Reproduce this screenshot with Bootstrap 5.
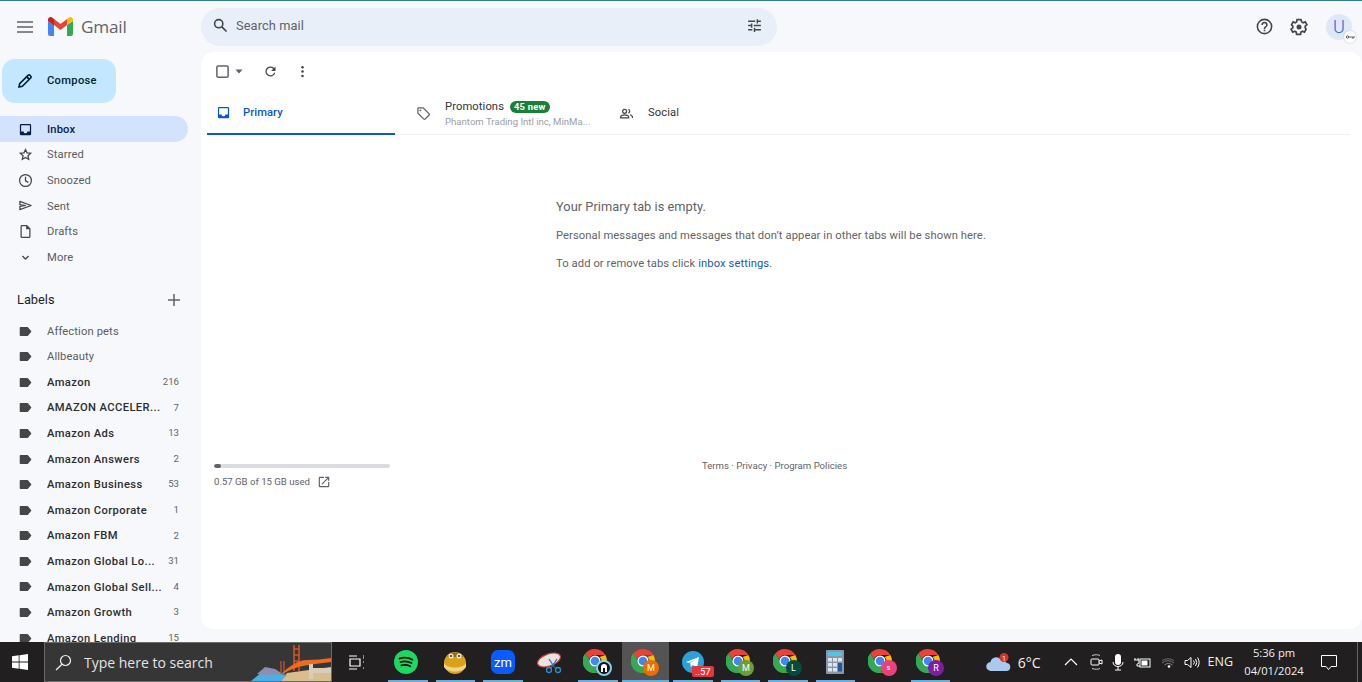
<!DOCTYPE html>
<html lang="en"><head><meta charset="utf-8"><title>Gmail</title>
<link href="https://cdn.jsdelivr.net/npm/bootstrap@5.3.0/dist/css/bootstrap.min.css" rel="stylesheet">
<style>
html,body{height:682px;overflow:hidden}
body{background:#f6f8fc;font-family:Roboto,"Liberation Sans",sans-serif;color:#5a5d5f;font-size:11.2px;border-top:1px solid #2f8285}
.gm-app{height:641px;overflow:hidden;position:relative}
.gm-top{height:51px}
.gm-burger{width:48px;padding-left:17px}
.gm-brand{font-size:17.2px;color:#5f6368;font-family:"Open Sans",Roboto,sans-serif;letter-spacing:-.2px;width:153px}
.gm-brand svg{margin-right:8px}
.gm-search{width:576px;height:38px;background:#e9eff9;border-radius:19px;padding:0 14px 2px 11px;font-size:12.8px;color:#5f6368;letter-spacing:.1px}
.gm-search span{margin-left:7px}
.gm-topicons{padding-right:10px;gap:15px}
.gm-avatar{width:26px;height:26px;border-radius:50%;background:#dfe8f7;color:#1a63e8;font-size:18px;font-weight:300;line-height:26px;text-align:center;position:relative;margin-left:2px}
.gm-key{position:absolute;right:-4px;bottom:-3px;width:12px;height:12px;background:#fff;border-radius:50%;display:flex;align-items:center;justify-content:center;box-shadow:0 0 2px #bbb}
.gm-body{height:590px}
.gm-side{width:201px;flex:none;overflow:hidden}
.gm-compose{width:114px;height:44px;margin:7px 0 13.4px 2px;background:#c2e7ff;border-radius:13px;color:#001d35;font-weight:500;font-size:11.2px;padding-left:15px;gap:14px;letter-spacing:.3px}
.gm-row{height:25.6px;display:flex;align-items:center;padding:0 9px 0 18px;width:188px;border-radius:0 13px 13px 0;letter-spacing:.12px}
.gm-row svg{flex:none;width:15px;height:15px;margin-right:14px}
.gm-row .gm-name{flex:1;min-width:0;white-space:nowrap;padding-top:2px}
.gm-row .gm-count{font-size:9.6px;color:#5f6368;font-weight:400;letter-spacing:0;width:19px;text-align:right;flex:none}
.gm-on{background:#d3e3fd;color:#041e49;font-weight:500}
.gm-bold{font-weight:500;color:#2b2d30;letter-spacing:.4px!important}
.gm-labels{height:25px;margin:17.6px 0 5.7px;padding:0 8px 0 17px;width:188px;font-size:12.8px;color:#1f1f1f}
.gm-panel{flex:1;height:577px;background:#fff;border-radius:13px;display:flex;flex-direction:column;padding-left:6px}
.gm-tool{height:38px;padding-left:8px;flex:none}
.gm-tool svg{display:block}
.gm-gap-a{margin-left:19px}
.gm-gap-b{margin-left:17px}
.gm-tabs{height:45px;border-bottom:1px solid #f0f0f0;margin-right:12px;flex:none}
.gm-tab{height:45px;width:188px;padding:2px 0 0 9px;display:flex;align-items:center;gap:13px}
.gm-tab-on{border-bottom:2px solid #0b57d0;color:#0b57d0;font-weight:500;gap:12px;letter-spacing:.08px}
.gm-tab-on span{padding-top:2px}
.gm-tab-promo{width:204px;padding-left:21px;gap:14px;color:#303236;letter-spacing:.1px}
.gm-tab-social{padding-left:20px;gap:14px;color:#303236;letter-spacing:.1px}
.gm-promo-text{padding-top:2px}
.gm-sub{font-size:9.6px;color:#9aa0a6;letter-spacing:0;white-space:nowrap;margin-top:-1px}
.gm-pill{background:#188038;color:#fff;border-radius:7px;font-size:9.4px;font-weight:700;padding:0 4px;line-height:12px;margin-left:6px;display:inline-block;letter-spacing:.2px}
.gm-empty{padding:63px 0 0 349px;color:#5f6368;height:329px;flex:none}
.gm-empty h2{font-size:12.8px;font-weight:400;margin:0 0 13px;line-height:17px;color:#5f6368;letter-spacing:.03px}
.gm-empty p{margin:0 0 13px;line-height:15px;font-size:11.2px;letter-spacing:.09px}
.gm-empty a{color:#1a56c4;text-decoration:none}
.gm-foot{padding-left:7px;font-size:9.6px;color:#5f6368}
.gm-store{width:176px}
.gm-track{height:4px;background:#dadce0;border-radius:2px;margin-bottom:7px;overflow:hidden}
.gm-fill{height:4px;background:#5f6368;border-radius:2px}
.gm-ext{margin-left:7px}
.gm-terms{margin-left:312px;line-height:11px;margin-top:-4px}
.gm-task{height:40px;background:#211f1f;color:#fff;font-family:"Open Sans","Liberation Sans",sans-serif}
.gm-win{width:44px;flex:none;padding-right:4px}
.gm-find{width:288px;height:40px;background:#363636;border:1px solid #6a6a6a;font-size:14px;color:#e4e4e4;padding-left:10px;gap:12px;flex:none;overflow:hidden;position:relative}
.gm-find .gm-art{position:absolute;right:0;bottom:0}
.gm-view{width:52px;flex:none;padding-right:4px}
.gm-cell{width:47.5px;height:40px;flex:none;position:relative;display:flex;align-items:center;justify-content:center}
.gm-run::after{content:"";position:absolute;left:4px;right:4px;bottom:0;height:2px;background:#65aee0}
.gm-cur{background:#545454}
.gm-cur::after{left:0;right:0}
.gm-chr{margin:0 5px 2px 0}
.gm-spot{margin-right:3px}
.gm-badge{position:absolute;right:10px;bottom:6px;width:16px;height:16px;border-radius:50%;color:#fff;font-size:9px;line-height:16px;text-align:center;font-family:Roboto,sans-serif}
.gm-b-lock{background:#111;border:2px solid #7fd0f0;line-height:10px}
.gm-b-lock svg{display:block;margin:1px auto}
.gm-b-o{background:#ef6c00}.gm-b-g{background:#689f38}.gm-b-t{background:#004d40}.gm-b-p{background:#ec407a;font-size:7.5px}.gm-b-v{background:#7b1fa2}
.gm-count-badge{position:absolute;left:23px;bottom:5px;background:#e8343a;color:#fff;font-size:9.5px;line-height:11px;padding:0 3px;border-radius:2px;font-family:Roboto,sans-serif}
.gm-tray{margin-left:auto;height:40px;font-size:12.5px;color:#f0f0f0}
.gm-wx{gap:7px;font-size:14px;margin-right:23px}
.gm-clock{font-size:11.2px;line-height:18px;text-align:center;width:72px;margin-left:5px}
.gm-note{margin-left:11px}
.gm-edge{width:5px;height:40px;border-left:1px solid #666;margin-left:20px}
.gm-trayicons{gap:9px}
.gm-ch{margin-right:3px}
.gm-mr1{margin-right:1px}
</style></head><body>
<div class="gm-app">
 <div class="gm-top d-flex align-items-center">
  <div class="gm-burger d-flex"><svg width="16" height="12" viewBox="0 0 16 12"><path d="M0 1h16M0 6h16M0 11h16" stroke="#5f6368" stroke-width="1.5"/></svg></div>
  <div class="gm-brand d-flex align-items-center"><svg width="25" height="19" viewBox="0 0 25 19"><path d="M0 4v13a2 2 0 0 0 2 2h4V8z" fill="#4285f4"/><path d="M19 8v11h4a2 2 0 0 0 2-2V4z" fill="#34a853"/><path d="M19 2v6l6-4.500V2.500C25 .5 22.500-.7 21 .5z" fill="#fbbc04"/><path d="M6 8V2l6.500 5L19 2v6l-6.500 5z" fill="#ea4335"/><path d="M0 2.500V4l6 4.500V2L4 .5C2.500-.7 0 .5 0 2.500z" fill="#c5221f"/></svg>Gmail</div>
  <div class="gm-search d-flex align-items-center"><svg width="17" height="17" viewBox="0 0 24 24"><circle cx="9.500" cy="9.500" r="5.800" fill="none" stroke="#444746" stroke-width="2.200"/><path d="M14 14l6.500 6.500" stroke="#444746" stroke-width="2.400"/></svg><span>Search mail</span>
   <svg class="ms-auto" width="17" height="17" viewBox="0 0 24 24"><path d="M3 17v2h6v-2zM3 5v2h10V5zm10 16v-2h8v-2h-8v-2h-2v6zM7 9v2H3v2h4v2h2V9zm14 4v-2H11v2zm-6-4h2V7h4V5h-4V3h-2z" fill="#444746"/></svg></div>
  <div class="gm-topicons d-flex align-items-center ms-auto">
   <svg width="19" height="19" viewBox="0 0 24 24"><path d="M11 18h2v-2h-2zm1-16a10 10 0 1 0 0 20 10 10 0 0 0 0-20zm0 18a8 8 0 1 1 0-16 8 8 0 0 1 0 16zm0-14a4 4 0 0 0-4 4h2a2 2 0 1 1 4 0c0 2-3 1.750-3 5h2c0-2.250 3-2.500 3-5a4 4 0 0 0-4-4z" fill="#444746"/></svg>
   <svg width="20" height="20" viewBox="0 0 24 24"><path d="M19.400 13a7.500 7.500 0 0 0 0-2l2.100-1.600-2-3.500-2.500 1a7.500 7.500 0 0 0-1.700-1L14.400 3.200h-4.800l-.4 2.700a7.500 7.500 0 0 0-1.700 1l-2.500-1-2 3.500L4.600 11a7.500 7.500 0 0 0 0 2l-2.100 1.600 2 3.500 2.500-1a7.500 7.500 0 0 0 1.700 1l.4 2.700h4.800l.4-2.700a7.500 7.500 0 0 0 1.700-1l2.500 1 2-3.500z" fill="none" stroke="#444746" stroke-width="2"/><circle cx="12" cy="12" r="3" fill="#444746"/></svg>
   <div class="gm-avatar">U<span class="gm-key"><svg width="9" height="4" viewBox="0 0 9 4"><circle cx="1.500" cy="2" r="1.200" fill="none" stroke="#333" stroke-width=".8"/><path d="M3 2h6M7 2v2" stroke="#333" stroke-width=".8"/></svg></span></div>
  </div>
 </div>
 <div class="gm-body d-flex">
  <aside class="gm-side">
   <div class="gm-compose d-flex align-items-center"><svg width="16" height="16" viewBox="0 0 24 24"><path d="M3 21l1-5L16.500 3.500a2 2 0 0 1 3 0l1 1a2 2 0 0 1 0 3L8 20z" fill="none" stroke="#001d35" stroke-width="2.400"/><path d="M14.500 5.500l4 4" stroke="#001d35" stroke-width="3"/></svg>Compose</div>
   <div class="gm-row gm-on"><svg viewBox="0 0 24 24"><path d="M19 3H5a2 2 0 0 0-2 2v14a2 2 0 0 0 2 2h14a2 2 0 0 0 2-2V5a2 2 0 0 0-2-2zm0 12h-4a3 3 0 0 1-6 0H5V5h14z" fill="#041e49"/></svg><span class="gm-name">Inbox</span></div>
   <div class="gm-row"><svg viewBox="0 0 24 24"><path d="M12 4l2.400 5.400 5.900.6-4.400 3.900 1.300 5.800L12 16.700l-5.200 3 1.300-5.800L3.700 10l5.900-.6z" fill="none" stroke="#444746" stroke-width="2"/></svg><span class="gm-name">Starred</span></div>
   <div class="gm-row"><svg viewBox="0 0 24 24"><circle cx="12" cy="12" r="9.500" fill="none" stroke="#444746" stroke-width="2"/><path d="M12 6v6.500l4.500 2.500" fill="none" stroke="#444746" stroke-width="2"/></svg><span class="gm-name">Snoozed</span></div>
   <div class="gm-row"><svg viewBox="0 0 24 24"><path d="M3 5.500L21 12 3 18.500v-5L12 12 3 10.500z" fill="none" stroke="#444746" stroke-width="2" stroke-linejoin="round"/></svg><span class="gm-name">Sent</span></div>
   <div class="gm-row"><svg viewBox="0 0 24 24"><path d="M6 2.500h8l5 5V20a1.500 1.500 0 0 1-1.500 1.500h-11.500A1.500 1.500 0 0 1 5 20V4a1.500 1.500 0 0 1 1-1.500zM14 2.500v5h5" fill="none" stroke="#444746" stroke-width="2"/></svg><span class="gm-name">Drafts</span></div>
   <div class="gm-row"><svg viewBox="0 0 24 24"><path d="M7 9.500l5 5 5-5" fill="none" stroke="#444746" stroke-width="2"/></svg><span class="gm-name">More</span></div>
   <div class="gm-labels d-flex align-items-center justify-content-between"><span>Labels</span><svg width="12" height="12" viewBox="0 0 12 12"><path d="M6 0v12M0 6h12" stroke="#5f6368" stroke-width="1.500"/></svg></div>
   <div class="gm-row"><svg viewBox="0 0 24 24"><use href="#lbl"/></svg><span class="gm-name">Affection pets</span></div>
   <div class="gm-row"><svg viewBox="0 0 24 24"><use href="#lbl"/></svg><span class="gm-name">Allbeauty</span></div>
   <div class="gm-row gm-bold"><svg viewBox="0 0 24 24"><use href="#lbl"/></svg><span class="gm-name">Amazon</span><span class="gm-count">216</span></div>
   <div class="gm-row gm-bold"><svg viewBox="0 0 24 24"><use href="#lbl"/></svg><span class="gm-name">AMAZON ACCELER...</span><span class="gm-count">7</span></div>
   <div class="gm-row gm-bold"><svg viewBox="0 0 24 24"><use href="#lbl"/></svg><span class="gm-name">Amazon Ads</span><span class="gm-count">13</span></div>
   <div class="gm-row gm-bold"><svg viewBox="0 0 24 24"><use href="#lbl"/></svg><span class="gm-name">Amazon Answers</span><span class="gm-count">2</span></div>
   <div class="gm-row gm-bold"><svg viewBox="0 0 24 24"><use href="#lbl"/></svg><span class="gm-name">Amazon Business</span><span class="gm-count">53</span></div>
   <div class="gm-row gm-bold"><svg viewBox="0 0 24 24"><use href="#lbl"/></svg><span class="gm-name">Amazon Corporate</span><span class="gm-count">1</span></div>
   <div class="gm-row gm-bold"><svg viewBox="0 0 24 24"><use href="#lbl"/></svg><span class="gm-name">Amazon FBM</span><span class="gm-count">2</span></div>
   <div class="gm-row gm-bold"><svg viewBox="0 0 24 24"><use href="#lbl"/></svg><span class="gm-name">Amazon Global Lo...</span><span class="gm-count">31</span></div>
   <div class="gm-row gm-bold"><svg viewBox="0 0 24 24"><use href="#lbl"/></svg><span class="gm-name">Amazon Global Sell...</span><span class="gm-count">4</span></div>
   <div class="gm-row gm-bold"><svg viewBox="0 0 24 24"><use href="#lbl"/></svg><span class="gm-name">Amazon Growth</span><span class="gm-count">3</span></div>
   <div class="gm-row gm-bold"><svg viewBox="0 0 24 24"><use href="#lbl"/></svg><span class="gm-name">Amazon Lending</span><span class="gm-count">15</span></div>
  </aside>
  <main class="gm-panel">
   <div class="gm-tool d-flex align-items-center">
    <svg width="15" height="15" viewBox="0 0 24 24"><rect x="3" y="3" width="18" height="18" rx="2" fill="none" stroke="#5f6368" stroke-width="2.400"/></svg>
    <svg class="ms-1" width="10" height="10" viewBox="0 0 10 10"><path d="M1.500 3.500h7L5 7.500z" fill="#5f6368"/></svg>
    <svg class="gm-gap-a" width="15" height="15" viewBox="0 0 24 24"><path d="M17.650 6.350A8 8 0 1 0 19.700 14h-2.100a6 6 0 1 1-1.400-6.200L13 11h7V4z" fill="#444746"/></svg>
    <svg class="gm-gap-b" width="15" height="15" viewBox="0 0 24 24"><circle cx="12" cy="5" r="2" fill="#444746"/><circle cx="12" cy="12" r="2" fill="#444746"/><circle cx="12" cy="19" r="2" fill="#444746"/></svg>
   </div>
   <div class="gm-tabs d-flex">
    <div class="gm-tab gm-tab-on"><svg width="15" height="15" viewBox="0 0 24 24"><path d="M19 3H5a2 2 0 0 0-2 2v14a2 2 0 0 0 2 2h14a2 2 0 0 0 2-2V5a2 2 0 0 0-2-2zm0 12h-4a3 3 0 0 1-6 0H5V5h14z" fill="#0b57d0"/></svg><span>Primary</span></div>
    <div class="gm-tab gm-tab-promo"><svg width="15" height="15" viewBox="0 0 24 24"><path d="M3 11.500V4a1 1 0 0 1 1-1h7.500L21 12.500a1.500 1.500 0 0 1 0 2L14.500 21a1.500 1.500 0 0 1-2 0z" fill="none" stroke="#5f6368" stroke-width="2"/><circle cx="7" cy="7" r="1.500" fill="#5f6368"/></svg><div class="gm-promo-text"><div>Promotions<span class="gm-pill">45 new</span></div><div class="gm-sub">Phantom Trading Intl inc, MinMa...</div></div></div>
    <div class="gm-tab gm-tab-social"><svg width="15" height="15" viewBox="0 0 24 24"><circle cx="9" cy="8.500" r="3.200" fill="none" stroke="#444746" stroke-width="2"/><path d="M2.500 19v-1.500c0-2 4-3.500 6.500-3.500s6.500 1.500 6.500 3.500V19z" fill="none" stroke="#444746" stroke-width="2"/><path d="M15 5.500a3.200 3.200 0 0 1 0 6M17.500 14c2 .5 4 1.500 4 3.500V19" fill="none" stroke="#444746" stroke-width="2"/></svg><span>Social</span></div>
   </div>
   <div class="gm-empty">
    <h2>Your Primary tab is empty.</h2>
    <p>Personal messages and messages that don’t appear in other tabs will be shown here.</p>
    <p>To add or remove tabs click <a href="#">inbox settings</a>.</p>
   </div>
   <div class="gm-foot d-flex">
    <div class="gm-store"><div class="gm-track"><div class="gm-fill" style="width:3.800%"></div></div>
     <div class="d-flex align-items-center">0.57 GB of 15 GB used<svg class="gm-ext" width="14" height="14" viewBox="0 0 24 24"><path d="M19 19H5V5h7V3H5a2 2 0 0 0-2 2v14a2 2 0 0 0 2 2h14a2 2 0 0 0 2-2v-7h-2zM14 3v2h3.600l-9.800 9.800 1.400 1.400L19 6.400V10h2V3z" fill="#5f6368"/></svg></div></div>
    <div class="gm-terms">Terms · Privacy · Program Policies</div>
   </div>
  </main>
 </div>
</div>
<footer class="gm-task d-flex align-items-center">
 <div class="gm-win d-flex align-items-center justify-content-center"><svg width="16" height="16" viewBox="0 0 16 16"><path d="M0 2.300L6.700 1.300V7.600H0zM7.500 1.200L16 0V7.600H7.500zM0 8.400H6.700V14.700L0 13.700zM7.500 8.400H16V16L7.500 14.800z" fill="#fff"/></svg></div>
 <div class="gm-find d-flex align-items-center"><svg width="17" height="17" viewBox="0 0 17 17"><circle cx="10.500" cy="6.500" r="5" fill="none" stroke="#f0f0f0" stroke-width="1.200"/><path d="M7 10.200L1 16" stroke="#f0f0f0" stroke-width="1.300"/></svg><span>Type here to search</span>
  <svg class="gm-art" width="80" height="38" viewBox="0 0 80 38"><path d="M30 38l6-8 44-6v14z" fill="#d8bd8e"/><path d="M0 38l10-8 14 0 12 2-6 6z" fill="#4cb0e6"/><path d="M6 31l8-7 10 2 8 5-14 1z" fill="#8c8fb0"/><path d="M30 31V18M33 31V18" stroke="#c0562a" stroke-width="1.300"/><path d="M43 28V2M48 28V2M43 6h5M43 12h5M43 18h5" stroke="#d2552a" stroke-width="1.600"/><path d="M30 31C38 24 46 17 56 17c8 0 16-1 24-2v4c-9 1-16 2-22 3-10 1-18 4-28 10z" fill="#ee6b1f"/><path d="M58 36V21h4v15zM62 25h18v5H62z" fill="#d8cdb8"/></svg></div>
 <div class="gm-view d-flex align-items-center justify-content-center"><svg width="17" height="15" viewBox="0 0 17 15"><path d="M1 1h8M1 14h8M2 4h10v7H2zM15 1h1M15 7h1M15 13h1M15 3h1" fill="none" stroke="#fff" stroke-width="1.200"/></svg></div>
 <div class="gm-cell gm-run"><svg class="gm-spot" width="24" height="24" viewBox="0 0 24 24"><circle cx="12" cy="12" r="12" fill="#1ed760"/><path d="M5.500 8.500c4-1.200 9-1 13 1.200M6.500 12c3.500-1 7.500-.8 11 1M7.300 15.300c3-.8 6-.6 9 .9" fill="none" stroke="#111" stroke-width="1.800" stroke-linecap="round"/></svg></div>
 <div class="gm-cell gm-run"><svg width="26" height="24" viewBox="0 0 26 24"><circle cx="13" cy="13" r="11" fill="#d9a21e"/><path d="M2 13c3 6 19 6 22 0v4c-3 6-19 6-22 0z" fill="#f0d48a"/><path d="M5 7c4-6 12-6 16 0z" fill="#8a6f2a"/><circle cx="9" cy="6" r="2.500" fill="#f5e9c8"/><circle cx="17" cy="6" r="2.500" fill="#f5e9c8"/><circle cx="9" cy="6" r="1" fill="#222"/><circle cx="17" cy="6" r="1" fill="#222"/></svg></div>
 <div class="gm-cell gm-run"><svg width="24" height="24" viewBox="0 0 24 24"><rect width="24" height="24" rx="7" fill="#0b5cff"/><text x="12" y="16.500" text-anchor="middle" font-size="13" font-family="Roboto,sans-serif" fill="#fff">zm</text></svg></div>
 <div class="gm-cell"><svg width="26" height="26" viewBox="0 0 26 26"><ellipse cx="12" cy="11" rx="12" ry="6" transform="rotate(-20 12 11)" fill="#e9e4e0" stroke="#c0413c" stroke-width="1.200"/><path d="M12 10l6 9M20 10l-6 9" stroke="#2a6fc0" stroke-width="1.300"/><circle cx="12" cy="21" r="2.500" fill="none" stroke="#2a90d0" stroke-width="1.300"/><circle cx="21" cy="21" r="2.500" fill="none" stroke="#2a90d0" stroke-width="1.300"/></svg></div>
 <div class="gm-cell gm-run"><svg class="gm-chr" width="24" height="24" viewBox="0 0 24 24"><use href="#chr"/></svg><span class="gm-badge gm-b-lock"><svg width="8" height="10" viewBox="0 0 8 10"><path d="M1 9V4a3 3 0 0 1 6 0v5H5V5H3v4z" fill="#fff"/></svg></span></div>
 <div class="gm-cell gm-run gm-cur"><svg class="gm-chr" width="24" height="24" viewBox="0 0 24 24"><use href="#chr"/></svg><span class="gm-badge gm-b-o">M</span></div>
 <div class="gm-cell gm-run"><svg width="22" height="22" viewBox="0 0 22 22"><circle cx="11" cy="11" r="11" fill="#2aa1da"/><path d="M4 11l13-5-2 11-4-3-2 2-1-4 6-4-7 4z" fill="#fff"/></svg><span class="gm-count-badge">..57</span></div>
 <div class="gm-cell gm-run"><svg class="gm-chr" width="24" height="24" viewBox="0 0 24 24"><use href="#chr"/></svg><span class="gm-badge gm-b-g">M</span></div>
 <div class="gm-cell gm-run"><svg class="gm-chr" width="24" height="24" viewBox="0 0 24 24"><use href="#chr"/></svg><span class="gm-badge gm-b-t">L</span></div>
 <div class="gm-cell gm-run"><svg width="18" height="24" viewBox="0 0 18 24"><rect width="18" height="24" rx="1" fill="#8a98a5"/><rect x="2" y="2" width="14" height="4" fill="#4fc3e8"/><g fill="#dfe5ea"><rect x="2" y="8" width="4" height="3.500"/><rect x="7" y="8" width="4" height="3.500"/><rect x="12" y="8" width="4" height="3.500"/><rect x="2" y="13" width="4" height="3.500"/><rect x="7" y="13" width="4" height="3.500"/><rect x="2" y="18" width="4" height="3.500"/><rect x="7" y="18" width="4" height="3.500"/></g><rect x="12" y="13" width="4" height="8.500" fill="#1d5a9a"/></svg></div>
 <div class="gm-cell"><svg class="gm-chr" width="24" height="24" viewBox="0 0 24 24"><use href="#chr"/></svg><span class="gm-badge gm-b-p">s</span></div>
 <div class="gm-cell gm-run"><svg class="gm-chr" width="24" height="24" viewBox="0 0 24 24"><use href="#chr"/></svg><span class="gm-badge gm-b-v">R</span></div>
 <div class="gm-tray d-flex align-items-center">
  <div class="gm-wx d-flex align-items-center"><svg width="25" height="19" viewBox="0 0 25 19"><path d="M5 18a4.500 4.500 0 0 1-.5-9 6 6 0 0 1 10-3 5 5 0 0 1 6 4 4 4 0 0 1-.5 8z" fill="#a9c9ef"/><circle cx="18" cy="4.500" r="4.500" fill="#d9302c"/><text x="18" y="7.500" text-anchor="middle" font-size="7" font-family="Roboto,sans-serif" fill="#fff">1</text></svg><span>6°C</span></div>
  <div class="gm-trayicons d-flex align-items-center"><svg class="gm-ch" width="14" height="8" viewBox="0 0 14 8"><path d="M1 7l6-6 6 6" fill="none" stroke="#fff" stroke-width="1.200"/></svg>
   <svg width="13" height="16" viewBox="0 0 13 16"><path d="M2 1.500c3-1 6-1 8 0M2 14.500c3 1 6 1 8 0" fill="none" stroke="#ccc"/><rect x="1" y="5" width="8" height="6" rx="1" fill="none" stroke="#fff"/><path d="M9 7l3-1v4l-3-1" fill="none" stroke="#fff"/></svg>
   <svg class="gm-mr1" width="12" height="17" viewBox="0 0 12 17"><rect x="3" y="0" width="6" height="11" rx="3" fill="#fff"/><path d="M1 8c0 6 10 6 10 0M6 13v3M3 16h6" fill="none" stroke="#fff"/></svg>
   <svg class="gm-mr1" width="17" height="11" viewBox="0 0 17 11"><rect x="6" y="2" width="10" height="8" fill="none" stroke="#fff"/><rect x="7.500" y="3.500" width="6" height="5" fill="#fff"/><path d="M1 1v2M4 1v2M0 3h5v2a2 2 0 0 1-2 2v2h3" fill="none" stroke="#fff"/></svg>
   <svg width="14" height="12" viewBox="0 0 14 12"><path d="M1 7a9 9 0 0 1 12 0" fill="none" stroke="#777"/><path d="M3.500 9a6 6 0 0 1 8 0" fill="none" stroke="#888"/><path d="M1 4.500a12 12 0 0 1 12 0" fill="none" stroke="#666"/><circle cx="8" cy="10.500" r="1.300" fill="#fff"/></svg>
   <svg width="16" height="13" viewBox="0 0 16 13"><path d="M1 4.500h2.500L7 1.500v10L3.500 8.500H1z" fill="none" stroke="#fff"/><path d="M9.500 4.500a3 3 0 0 1 0 4M11.500 3a6 6 0 0 1 0 7M13.500 1.500a9 9 0 0 1 0 10" fill="none" stroke="#fff"/></svg>
  </div>
  <span class="ms-2">ENG</span>
  <div class="gm-clock"><div>5:36 pm</div><div>04/01/2024</div></div>
  <svg class="gm-note" width="16" height="15" viewBox="0 0 16 15"><path d="M.5.500h15v11H10l-2.500 3-2.500-3H.5z" fill="none" stroke="#fff"/></svg>
  <div class="gm-edge"></div>
 </div>
</footer>
<svg width="0" height="0" class="position-absolute"><defs><g id="chr"><path d="M12 0a12 12 0 0 1 10.400 6H12a6 6 0 0 0-5.800 4.500L2.500 4.200A12 12 0 0 1 12 0z" fill="#ea4335"/><path d="M22.400 6A12 12 0 0 1 13 23.900l5-8.700A6 6 0 0 0 16.500 8z" fill="#fbbc04"/><path d="M13 24A12 12 0 0 1 2.500 4.200l5.200 9A6 6 0 0 0 15 17.500z" fill="#34a853"/><circle cx="12" cy="12" r="5.500" fill="#fff"/><circle cx="12" cy="12" r="4.300" fill="#4285f4"/></g><path id="lbl" d="M4 6h11l5 6-5 6H4z" fill="#444746" stroke="#444746" stroke-linejoin="round" stroke-width="2.500"/></defs></svg>
</body></html>
